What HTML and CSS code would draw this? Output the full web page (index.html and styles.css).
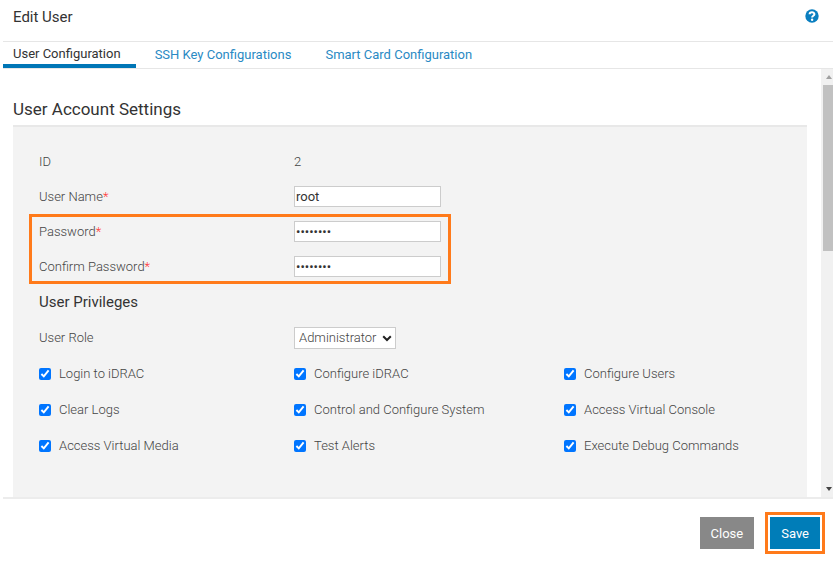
FILE: index.html
```html
<!DOCTYPE html>
<html lang="en">

<head>
    <meta charset="utf-8">
    <title>Edit User</title>
    <link rel="stylesheet" href="styles.css">
</head>

<body>

    <div class="dialog">
        <header class="header">
            <h1>Edit User</h1>
            <a class="help" href="#" aria-label="Help">
                <svg width="14" height="14" viewBox="0 0 14 14">
                    <circle cx="7" cy="7" r="6.7" fill="#0a7fc0" />
                    <path d="M4.6 5.3C4.6 2.5 9.4 2.6 9.4 5.2C9.4 6.9 7.1 6.7 7.1 8.6" fill="none" stroke="white" stroke-width="2" />
                    <circle cx="7.1" cy="10.7" r="1.2" fill="white" />
                </svg>
            </a>
        </header>

        <nav class="tabs">
            <a class="tab active" href="#">User Configuration</a>
            <a class="tab" href="#">SSH Key Configurations</a>
            <a class="tab" href="#">Smart Card Configuration</a>
        </nav>

        <div class="middle">
            <main class="content">
                <h2>User Account Settings</h2>

                <form class="panel" id="user_form">
                    <div class="row">
                        <span>ID</span>
                        <span>2</span>
                    </div>
                    <div class="row">
                        <label for="username">User Name<span class="required">*</span></label>
                        <input type="text" id="username" value="root">
                    </div>

                    <div class="highlight">
                        <div class="row">
                            <label for="password">Password<span class="required">*</span></label>
                            <input type="password" id="password" value="password">
                        </div>
                        <div class="row">
                            <label for="confirm">Confirm Password<span class="required">*</span></label>
                            <input type="password" id="confirm" value="password">
                        </div>
                    </div>

                    <h3>User Privileges</h3>

                    <div class="row">
                        <label for="role">User Role</label>
                        <div class="select">
                            <select id="role">
                                <option>Administrator</option>
                                <option>Operator</option>
                                <option>Read Only</option>
                                <option>None</option>
                            </select>
                            <svg width="10" height="7" viewBox="0 0 10 7">
                                <path d="M1.2 1.2L5 5L8.8 1.2" fill="none" stroke="#222222" stroke-width="2" />
                            </svg>
                        </div>
                    </div>

                    <div class="privileges">
                        <label><input type="checkbox" checked> Login to iDRAC</label>
                        <label><input type="checkbox" checked> Configure iDRAC</label>
                        <label><input type="checkbox" checked> Configure Users</label>
                        <label><input type="checkbox" checked> Clear Logs</label>
                        <label><input type="checkbox" checked> Control and Configure System</label>
                        <label><input type="checkbox" checked> Access Virtual Console</label>
                        <label><input type="checkbox" checked> Access Virtual Media</label>
                        <label><input type="checkbox" checked> Test Alerts</label>
                        <label><input type="checkbox" checked> Execute Debug Commands</label>
                    </div>
                </form>
            </main>

            <div class="scrollbar">
                <svg width="8" height="16" viewBox="0 0 8 16">
                    <path d="M1 10L4 6L7 10Z" fill="#a0a0a0" />
                </svg>
                <div class="thumb"></div>
                <svg width="8" height="16" viewBox="0 0 8 16">
                    <path d="M1 6L7 6L4 10Z" fill="#444444" />
                </svg>
            </div>
        </div>

        <footer class="footer">
            <button type="button" class="close">Close</button>
            <button type="submit" form="user_form" class="save">Save</button>
        </footer>
    </div>

</body>

</html>
```
FILE: styles.css
```css
body {
    margin: 0;
    background-color: white;
    font-family: Roboto, "Liberation Sans", sans-serif;
    font-size: 13px;
    color: #333333;
}

.dialog {
    margin-left: 3px;
}

.header {
    display: flex;
    justify-content: space-between;
    align-items: center;
    height: 33px;
    padding: 0 14px 8px 10px;
    border-bottom: 1px solid #e6e6e6;
}

h1,
h2,
h3 {
    margin: 0;
    font-weight: 400;
}

h1 {
    font-size: 15px;
}

.help {
    display: flex;
    margin-bottom: 2px;
}

.tabs {
    display: flex;
    gap: 4px;
    height: 26px;
    border-bottom: 1px solid #e6e6e6;
}

.tab {
    padding: 0 15px;
    color: #2a8ac4;
    text-decoration: none;
    line-height: 25px;
}

.tab.active {
    padding-left: 10px;
    color: #333333;
    line-height: 23px;
    border-bottom: 4px solid #0076b6;
}

.middle {
    display: flex;
    border-bottom: 2px solid #ececec;
}

.content {
    flex: 1;
    padding: 28px 14px 0 10px;
}

h2 {
    font-size: 17px;
    line-height: 24px;
    margin-bottom: 4px;
}

.panel {
    padding: 17px 26px 34px;
    background-color: #f3f3f3;
    border-top: 2px solid #e8e8e8;
    font-weight: 300;
    color: #444444;
}

.row {
    display: grid;
    grid-template-columns: 255px 147px;
    align-items: center;
    height: 35px;
}

.required {
    color: #ff3333;
}

input[type=text],
input[type=password] {
    box-sizing: border-box;
    width: 100%;
    height: 21px;
    padding: 0 1px;
    border: 1px solid #cccccc;
    border-radius: 0;
    background-color: white;
    color: #333333;
    font: inherit;
    font-weight: 400;
}

.highlight {
    width: fit-content;
    margin-left: -10px;
    padding: 0 10px;
    outline: 3px solid #ff7a1a;
    outline-offset: -3px;
}

h3 {
    font-size: 15px;
    line-height: 36px;
    color: #333333;
}

.select {
    position: relative;
    width: 102px;
}

.select select {
    appearance: none;
    display: block;
    width: 100%;
    height: 22px;
    padding: 0 4px;
    border: 1px solid #cccccc;
    border-radius: 0;
    background-color: white;
    color: #444444;
    font: inherit;
}

.select svg {
    position: absolute;
    top: 8px;
    right: 4px;
    pointer-events: none;
}

.privileges {
    display: grid;
    grid-template-columns: 255px 270px 1fr;
}

.privileges label {
    display: flex;
    align-items: center;
    gap: 8px;
    height: 36px;
}

input[type=checkbox] {
    width: 12px;
    height: 12px;
    margin: 2px 0 0;
    accent-color: #0075ff;
}

.scrollbar {
    display: flex;
    flex-direction: column;
    align-items: center;
    width: 12px;
    background-color: #f1f1f1;
}

.scrollbar svg {
    margin-left: 4px;
}

.scrollbar .thumb {
    align-self: stretch;
    height: 166px;
    margin: 0 0 auto 2px;
    background-color: #c1c1c1;
}

.footer {
    display: flex;
    justify-content: flex-end;
    gap: 16px;
    padding: 18px 13px;
}

button {
    height: 32px;
    padding: 0 11px;
    border: none;
    color: white;
    font: inherit;
}

.close {
    background-color: #888888;
}

.save {
    background-color: #007db8;
    outline: 3px solid #ff7a1a;
    outline-offset: 2px;
}
```
